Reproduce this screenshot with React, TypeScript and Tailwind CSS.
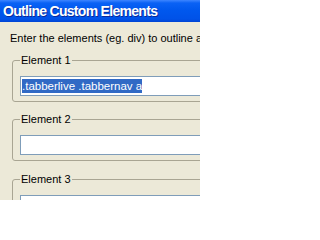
export default function App() {
  const fields = [
    { label: "Element 1", value: ".tabberlive .tabbernav a", mt: "mt-[9px]" },
    { label: "Element 2", value: "", mt: "mt-[11px]" },
    { label: "Element 3", value: "", mt: "mt-[12px]" },
  ]

  return (
    <div className="w-[200px] h-[200px] overflow-hidden bg-[#ECE9D8] font-['Liberation_Sans',Arial,sans-serif]">
      <div className="w-[320px]">
        {/* Title bar */}
        <div className="h-[22px] flex items-center pl-[3px] bg-[linear-gradient(to_bottom,#3d85ff_0px,#0a62f5_3px,#0058ee_10px,#0052e8_19px,#0044d4_22px)]">
          <span className="text-white text-[14px] font-bold tracking-[-0.7px] [text-shadow:1px_1px_#0a2a9a]">
            Outline Custom Elements
          </span>
        </div>

        {/* Body */}
        <div className="pt-[10px] pl-[10px]">
          <p className="text-[11px] leading-[13px] text-black whitespace-nowrap">
            Enter the elements (eg. div) to outline and their styles:
          </p>

          {fields.map((f) => (
            <fieldset
              key={f.label}
              className={`${f.mt} ml-[2px] w-[300px] border border-[#a9a593] rounded-[3px] pl-[7px] pb-[5px]`}
            >
              <legend className="px-[1px] text-[11px] leading-[12px] text-black">{f.label}</legend>
              <div className="mt-[10px] h-[20px] w-[280px] border border-[#7F9DB9] bg-white flex items-center pl-[1px]">
                {f.value && (
                  <span className="bg-[#316AC5] text-white text-[11.5px] leading-[14px] whitespace-nowrap">
                    {f.value}
                  </span>
                )}
              </div>
            </fieldset>
          ))}
        </div>
      </div>
    </div>
  )
}
